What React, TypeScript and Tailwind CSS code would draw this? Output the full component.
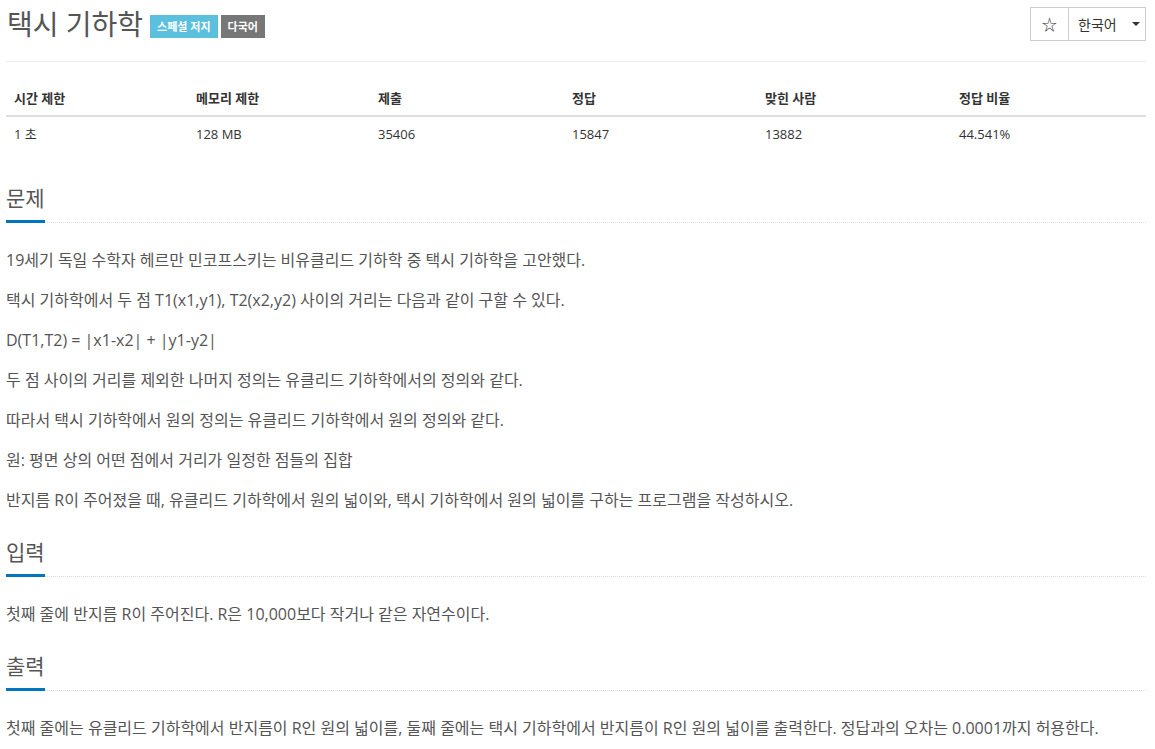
import React from "react";

const font = { fontFamily: '"Open Sans", "Noto Sans CJK KR", sans-serif' };

const stats = [
  { label: "시간 제한", value: "1 초", w: "w-[182px]" },
  { label: "메모리 제한", value: "128 MB", w: "w-[182px]" },
  { label: "제출", value: "35406", w: "w-[194px]" },
  { label: "정답", value: "15847", w: "w-[193px]" },
  { label: "맞힌 사람", value: "13882", w: "w-[194px]" },
  { label: "정답 비율", value: "44.541%", w: "flex-1" },
];

const SectionTitle = ({ title }: { title: string }) => (
  <div className="relative border-b border-dotted border-[#ddd]">
    <h2 className="inline-block border-b-[3px] border-[#0076c0] pb-[7px] text-[21px] leading-[30px] text-[#555] -mb-px">
      {title}
    </h2>
  </div>
);

const App = () => {
  return (
    <div className="bg-white min-h-[749px] pl-[6px] pr-[9px] text-[#333]" style={font}>
      {/* Header */}
      <div className="flex items-start justify-between border-b border-[#eee] h-[62px]">
        <div className="flex items-center pt-[6px]">
          <h1 className="text-[28px] leading-[36px] text-[#555] ml-px">택시 기하학</h1>
          <span className="ml-[7px] mt-[4px] bg-[#5bc0de] text-white text-[11px] font-bold px-[7px] h-[23px] leading-[23px]">
            스페셜 저지
          </span>
          <span className="ml-[3px] mt-[4px] bg-[#777] text-white text-[11px] font-bold px-[7px] h-[23px] leading-[23px]">
            다국어
          </span>
        </div>
        <div className="flex mt-[7px] border border-[#ccc] h-[34px] text-[14px] text-[#333]">
          <button className="w-[38px] flex items-center justify-center border-r border-[#ccc] text-[15px]">☆</button>
          <button className="w-[76px] flex items-center pl-[9px] gap-[15px]">
            <span>한국어</span>
            <span className="w-0 h-0 border-l-[4px] border-r-[4px] border-t-[4px] border-l-transparent border-r-transparent border-t-[#333]" />
          </button>
        </div>
      </div>

      {/* Stats table */}
      <div className="mt-[20px] text-[13px]">
        <div className="flex border-b-2 border-[#ddd] h-[35px] items-center font-bold">
          {stats.map((s) => (
            <div key={s.label} className={`${s.w} px-[8px]`}>
              {s.label}
            </div>
          ))}
        </div>
        <div className="flex h-[35px] items-center">
          {stats.map((s) => (
            <div key={s.label} className={`${s.w} px-[8px]`}>
              {s.value}
            </div>
          ))}
        </div>
      </div>

      {/* 문제 */}
      <div className="mt-[31px]">
        <SectionTitle title="문제" />
        <div className="pt-[24px] text-[16px] leading-[26px] text-[#555] flex flex-col gap-[14px]">
          <p>19세기 독일 수학자 헤르만 민코프스키는 비유클리드 기하학 중 택시 기하학을 고안했다.</p>
          <p>택시 기하학에서 두 점 T1(x1,y1), T2(x2,y2) 사이의 거리는 다음과 같이 구할 수 있다.</p>
          <p>D(T1,T2) = |x1-x2| + |y1-y2|</p>
          <p>두 점 사이의 거리를 제외한 나머지 정의는 유클리드 기하학에서의 정의와 같다.</p>
          <p>따라서 택시 기하학에서 원의 정의는 유클리드 기하학에서 원의 정의와 같다.</p>
          <p>원: 평면 상의 어떤 점에서 거리가 일정한 점들의 집합</p>
          <p>반지름 R이 주어졌을 때, 유클리드 기하학에서 원의 넓이와, 택시 기하학에서 원의 넓이를 구하는 프로그램을 작성하시오.</p>
        </div>
      </div>

      {/* 입력 */}
      <div className="mt-[24px]">
        <SectionTitle title="입력" />
        <div className="pt-[24px] text-[16px] leading-[26px] text-[#555]">
          <p>첫째 줄에 반지름 R이 주어진다. R은 10,000보다 작거나 같은 자연수이다.</p>
        </div>
      </div>

      {/* 출력 */}
      <div className="mt-[24px]">
        <SectionTitle title="출력" />
        <div className="pt-[24px] text-[16px] leading-[26px] text-[#555]">
          <p>첫째 줄에는 유클리드 기하학에서 반지름이 R인 원의 넓이를, 둘째 줄에는 택시 기하학에서 반지름이 R인 원의 넓이를 출력한다. 정답과의 오차는 0.0001까지 허용한다.</p>
        </div>
      </div>
    </div>
  );
};

export default App;
